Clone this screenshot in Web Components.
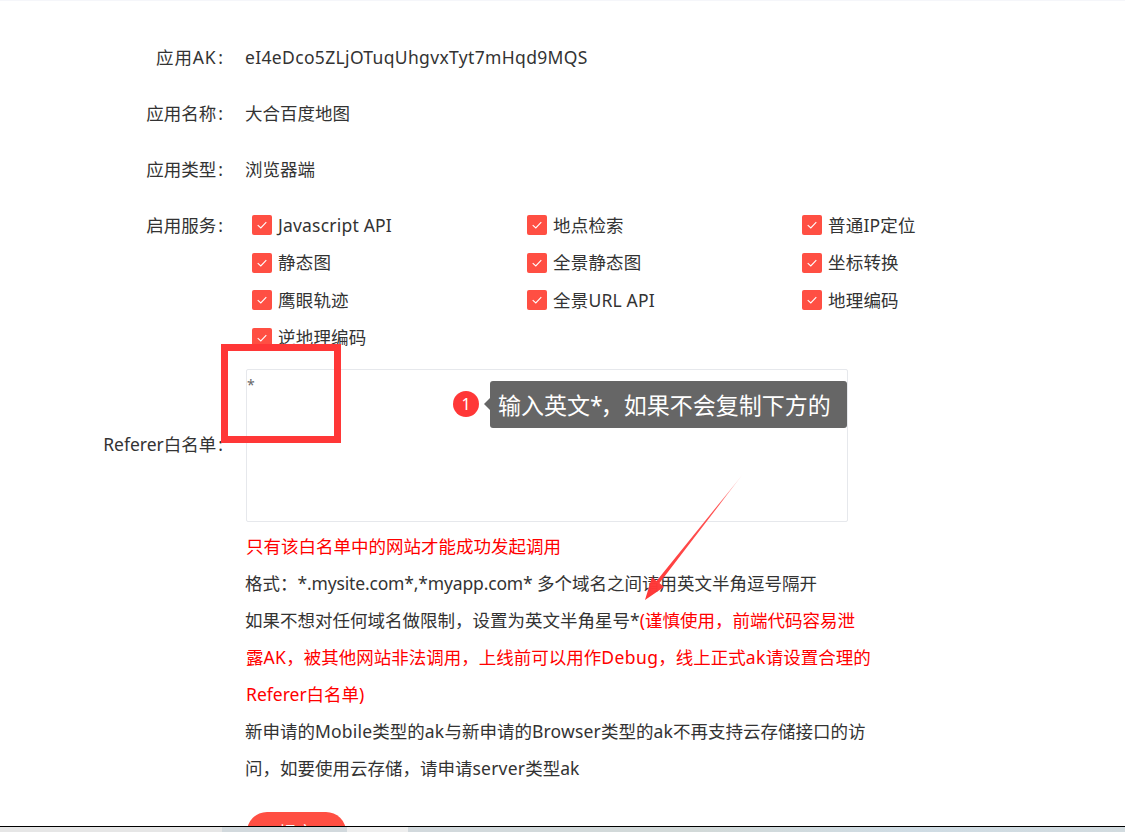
<!DOCTYPE html>
<html lang="zh">
<head>
<meta charset="utf-8">
<title>应用详情</title>
<style>
  html, body { margin: 0; height: 100%; overflow: hidden; background: #fff; }
  body { font-family: "Noto Sans", "Noto Sans CJK SC", sans-serif; font-size: 17.5px; color: #333; }
</style>
</head>
<body>
<app-screen>
  <form-row label="应用AK" tall style="--label-spacing:.8px"><span style="letter-spacing:.34px">eI4eDco5ZLjOTuqUhgvxTyt7mHqd9MQS</span></form-row>
  <form-row label="应用名称" tall>大合百度地图</form-row>
  <form-row label="应用类型" tall>浏览器端</form-row>
  <form-row label="启用服务" id="services">
    <service-grid>
      <check-item>Javascript API</check-item>
      <check-item>地点检索</check-item>
      <check-item>普通IP定位</check-item>
      <check-item>静态图</check-item>
      <check-item>全景静态图</check-item>
      <check-item>坐标转换</check-item>
      <check-item>鹰眼轨迹</check-item>
      <check-item>全景URL API</check-item>
      <check-item>地理编码</check-item>
      <check-item>逆地理编码</check-item>
    </service-grid>
  </form-row>
  <referer-box></referer-box>
  <help-text></help-text>
  <submit-button>提交</submit-button>
  <guide-overlay slot="overlay"></guide-overlay>
</app-screen>

<script>
const templateAppScreen = document.createElement("template");
templateAppScreen.innerHTML = `
  <style>
    :host { display: flex; flex-direction: column; height: 832px; position: relative; overflow: hidden; }
    #top-line { height: 1px; background: #f5f6fa; flex: none; }
    #content { flex: 1; min-height: 0; overflow: hidden; padding-top: 27.5px; }
    #taskbar { flex: none; height: 5px; border-top: 1px solid #000; display: flex; }
    #taskbar span:nth-child(1) { width: 222px; background: #e6e6e6; }
    #taskbar span:nth-child(2) { width: 125px; background: #d2d9dd; }
    #taskbar span:nth-child(3) { width: 61px; background: #eeeeee; }
    #taskbar span:nth-child(4) { flex: 1; background: linear-gradient(90deg, #d2d9dd, #d2d9d8 40%, #cfdce4 70%, #d2dbdf); }
  </style>
  <div id="top-line"></div>
  <div id="content"><slot></slot></div>
  <div id="taskbar"><span></span><span></span><span></span><span></span></div>
  <slot name="overlay"></slot>
`;
class AppScreen extends HTMLElement {
  constructor() {
    super();
    this.attachShadow({ mode: "open" }).appendChild(templateAppScreen.content.cloneNode(true));
  }
}
customElements.define("app-screen", AppScreen);

const templateFormRow = document.createElement("template");
templateFormRow.innerHTML = `
  <style>
    :host { display: flex; line-height: 56.4px; }
    :host(:not([tall])) { line-height: 37.4px; margin-top: 9px; }
    #label { width: 223px; flex: none; text-align: right; }
    #text { letter-spacing: var(--label-spacing, 0); }
    #colon { margin-left: 2px; }
    #value { margin-left: 22px; flex: 1; }
  </style>
  <div id="label"><span id="text"></span><span id="colon">:</span></div>
  <div id="value"><slot></slot></div>
`;
class FormRow extends HTMLElement {
  constructor() {
    super();
    const shadow = this.attachShadow({ mode: "open" });
    shadow.appendChild(templateFormRow.content.cloneNode(true));
    shadow.getElementById("text").textContent = this.getAttribute("label");
  }
}
customElements.define("form-row", FormRow);

const templateServiceGrid = document.createElement("template");
templateServiceGrid.innerHTML = `
  <style>
    :host { display: grid; grid-template-columns: repeat(3, 275px); padding-left: 7px; }
  </style>
  <slot></slot>
`;
class ServiceGrid extends HTMLElement {
  constructor() {
    super();
    this.attachShadow({ mode: "open" }).appendChild(templateServiceGrid.content.cloneNode(true));
  }
}
customElements.define("service-grid", ServiceGrid);

const templateCheckItem = document.createElement("template");
templateCheckItem.innerHTML = `
  <style>
    :host { display: flex; align-items: center; gap: 6px; height: 37.4px; line-height: 37.4px; letter-spacing: .2px; }
    #box { width: 20px; height: 20px; border-radius: 2px; background: #ff4f43; display: flex; align-items: center; justify-content: center; }
    svg { width: 12px; height: 12px; }
  </style>
  <span id="box"><svg viewBox="0 0 12 12"><path d="M1.7 6.2 4.8 9 10.3 3.2" fill="none" stroke="#fff" stroke-width="1.1"/></svg></span>
  <span><slot></slot></span>
`;
class CheckItem extends HTMLElement {
  constructor() {
    super();
    this.attachShadow({ mode: "open" }).appendChild(templateCheckItem.content.cloneNode(true));
  }
}
customElements.define("check-item", CheckItem);

const templateRefererBox = document.createElement("template");
templateRefererBox.innerHTML = `
  <style>
    :host { display: flex; align-items: center; margin-top: 12.7px; }
    #label { width: 223px; flex: none; text-align: right; margin-bottom: 4px; }
    #colon { margin-left: 2px; }
    #area { margin-left: 23px; width: 602px; height: 153px; box-sizing: border-box; border: 1px solid #e6e8ec; border-radius: 2px; color: #666; font-size: 14px; line-height: 20px; padding: 5px 0 0 0; }
  </style>
  <div id="label">Referer白名单<span id="colon">:</span></div>
  <div id="area">*</div>
`;
class RefererBox extends HTMLElement {
  constructor() {
    super();
    this.attachShadow({ mode: "open" }).appendChild(templateRefererBox.content.cloneNode(true));
  }
}
customElements.define("referer-box", RefererBox);

const templateHelpText = document.createElement("template");
templateHelpText.innerHTML = `
  <style>
    :host { display: block; margin: 6px 0 0 245px; line-height: 37px; white-space: nowrap; }
    .red { color: #f00; }
    .start { margin-left: 1px; }
    .tight { letter-spacing: -.16px; }
    .wide { letter-spacing: .4px; }
    .wider { letter-spacing: .2px; }
  </style>
  <div class="red start">只有该白名单中的网站才能成功发起调用</div>
  <div>格式：<span class="tight">*.mysite.com*,*myapp.com* </span>多个域名之间请用英文半角逗号隔开</div>
  <div>如果不想对任何域名做限制，设置为英文半角星号*<span class="red">(谨慎使用，前端代码容易泄</span></div>
  <div class="red start">露<span class="wide">AK</span>，被其他网站非法调用，上线前可以用作<span class="wide">Debug</span>，线上正式<span class="wide">ak</span>请设置合理的</div>
  <div class="red start">Referer白名单)</div>
  <div>新申请的<span class="wider">Mobile</span>类型的<span class="wider">ak</span>与新申请的<span class="wider">Browser</span>类型的<span class="wider">ak</span>不再支持云存储接口的访</div>
  <div>问，如要使用云存储，请申请<span class="wider">server</span>类型ak</div>
`;
class HelpText extends HTMLElement {
  constructor() {
    super();
    this.attachShadow({ mode: "open" }).appendChild(templateHelpText.content.cloneNode(true));
  }
}
customElements.define("help-text", HelpText);

const templateSubmitButton = document.createElement("template");
templateSubmitButton.innerHTML = `
  <style>
    :host { display: block; margin: 25px 0 0 247px; width: 99px; height: 40px; border-radius: 20px; background: #ff4f43; color: #fff; text-align: center; line-height: 40px; }
  </style>
  <slot></slot>
`;
class SubmitButton extends HTMLElement {
  constructor() {
    super();
    this.attachShadow({ mode: "open" }).appendChild(templateSubmitButton.content.cloneNode(true));
  }
}
customElements.define("submit-button", SubmitButton);

const templateGuideOverlay = document.createElement("template");
templateGuideOverlay.innerHTML = `
  <style>
    :host { position: absolute; inset: 0; pointer-events: none; display: block; }
    #frame { position: absolute; left: 221px; top: 344px; width: 120px; height: 99px; box-sizing: border-box; border: 7px solid #ff3737; }
    #badge { position: absolute; left: 453px; top: 391px; width: 26px; height: 26px; border-radius: 50%; background: #ff3737; color: #fff; font-size: 16px; line-height: 26px; text-align: center; }
    #tip { position: absolute; left: 490px; top: 381px; width: 357px; height: 47px; box-sizing: border-box; border-radius: 3px; background: #666; color: #fff; font-size: 23px; line-height: 48px; padding-left: 8px; white-space: nowrap; }
    #star { letter-spacing: -2px; }
    #tip::before { content: ""; position: absolute; left: -6px; top: 17px; border: 6px solid transparent; border-left: 0; border-right-color: #666; }
    svg { position: absolute; left: 0; top: 0; }
  </style>
  <div id="frame"></div>
  <div id="badge">1</div>
  <div id="tip">输入英文<span id="star">*</span>，如果不会复制下方的</div>
  <svg width="1125" height="832" viewBox="0 0 1125 832">
    <defs>
      <linearGradient id="fade" x1="743" y1="474" x2="645" y2="600" gradientUnits="userSpaceOnUse">
        <stop offset="0" stop-color="#ff3737" stop-opacity="0.1"/>
        <stop offset="0.25" stop-color="#ff3737" stop-opacity="0.85"/>
        <stop offset="1" stop-color="#ff3737"/>
      </linearGradient>
    </defs>
    <path d="M743 474 659.5 583 664 587 645 600 652 577 656.5 581Z" fill="url(#fade)"/>
  </svg>
`;
class GuideOverlay extends HTMLElement {
  constructor() {
    super();
    this.attachShadow({ mode: "open" }).appendChild(templateGuideOverlay.content.cloneNode(true));
  }
}
customElements.define("guide-overlay", GuideOverlay);
</script>
</body>
</html>
